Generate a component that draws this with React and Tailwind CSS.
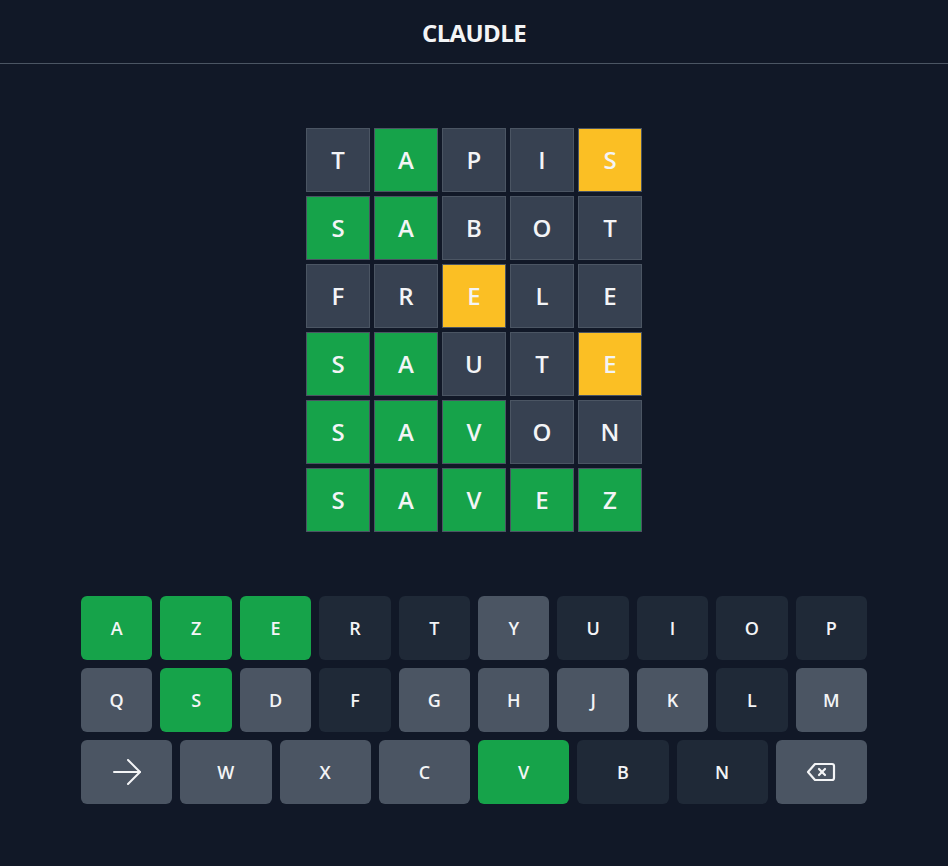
import React from "react";

const guesses = [
  ["TAPIS", "xgxxy"],
  ["SABOT", "ggxxx"],
  ["FRELE", "xxyxx"],
  ["SAUTE", "ggxxy"],
  ["SAVON", "gggxx"],
  ["SAVEZ", "ggggg"],
];

const tileColor = {
  g: "bg-[#16a34a]",
  y: "bg-[#fbbf24]",
  x: "bg-[#374151]",
};

// key states: g = correct, x = absent, u = unused
const rows = [
  [["A", "g"], ["Z", "g"], ["E", "g"], ["R", "x"], ["T", "x"], ["Y", "u"], ["U", "x"], ["I", "x"], ["O", "x"], ["P", "x"]],
  [["Q", "u"], ["S", "g"], ["D", "u"], ["F", "x"], ["G", "u"], ["H", "u"], ["J", "u"], ["K", "u"], ["L", "x"], ["M", "u"]],
  [["ENTER", "u"], ["W", "u"], ["X", "u"], ["C", "u"], ["V", "g"], ["B", "x"], ["N", "x"], ["BACK", "u"]],
];

const keyColor = {
  g: "bg-[#16a34a]",
  x: "bg-[#1f2937]",
  u: "bg-[#4b5563]",
};

const EnterIcon = () => (
  <svg width="30" height="26" viewBox="0 0 30 26" fill="none" stroke="currentColor" strokeWidth="2" strokeLinecap="round" strokeLinejoin="round">
    <path d="M2 13h26" />
    <path d="M16 1l12 12-12 12" />
  </svg>
);

const BackIcon = () => (
  <svg width="30" height="20" viewBox="0 0 30 20" fill="none" stroke="currentColor" strokeWidth="2.2" strokeLinecap="round" strokeLinejoin="round">
    <path d="M9 2h17a2 2 0 0 1 2 2v12a2 2 0 0 1-2 2H9L2 10z" />
    <path d="M13 7l6 6" />
    <path d="M19 7l-6 6" />
  </svg>
);

function Key({ label, state }) {
  let content = label;
  if (label === "ENTER") content = <EnterIcon />;
  if (label === "BACK") content = <BackIcon />;
  return (
    <button
      type="button"
      className={`flex-1 h-16 rounded-md flex items-center justify-center text-[#f3f4f6] text-lg font-semibold ${keyColor[state]}`}
    >
      {content}
    </button>
  );
}

export default function App() {
  return (
    <div className="min-h-screen bg-[#111827] text-[#f3f4f6]" style={{ fontFamily: '"Open Sans", "Noto Sans", sans-serif' }}>
      <header className="h-16 border-b border-[#4b5563] flex items-center justify-center">
        <h1 className="text-2xl font-bold tracking-tight mt-0.5">CLAUDLE</h1>
      </header>

      <div className="mt-16 flex flex-col items-center gap-1">
        {guesses.map(([word, res], i) => (
          <div key={i} className="flex gap-1">
            {word.split("").map((ch, j) => (
              <div
                key={j}
                className={`w-16 h-16 border border-[#4b5563] flex items-center justify-center text-2xl font-semibold ${tileColor[res[j]]}`}
              >
                {ch}
              </div>
            ))}
          </div>
        ))}
      </div>

      <div className="mt-16 w-[786px] mx-auto flex flex-col gap-2">
        {rows.map((row, i) => (
          <div key={i} className="flex gap-2">
            {row.map(([label, state]) => (
              <Key key={label} label={label} state={state} />
            ))}
          </div>
        ))}
      </div>
    </div>
  );
}
